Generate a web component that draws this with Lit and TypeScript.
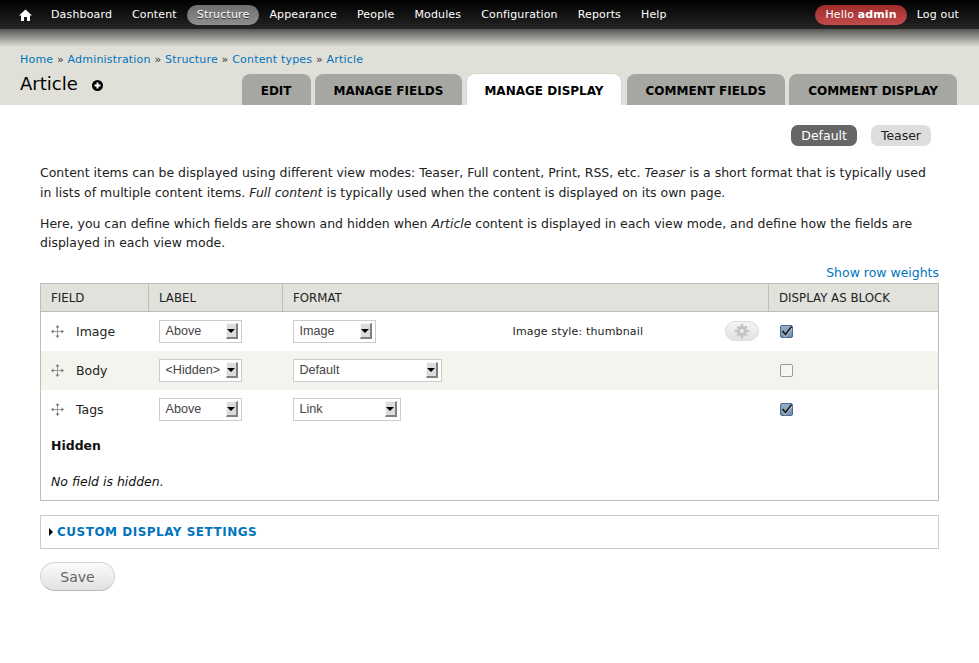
import { LitElement, html, css, svg } from 'lit';
import { customElement } from 'lit/decorators.js';

const NAV = ['Dashboard', 'Content', 'Structure', 'Appearance', 'People', 'Modules', 'Configuration', 'Reports', 'Help'];
const CRUMBS = ['Home', 'Administration', 'Structure', 'Content types', 'Article'];
const TABS = ['Edit', 'Manage fields', 'Manage display', 'Comment fields', 'Comment display'];

const ROWS = [
  { name: 'Image', label: 'Above', format: 'Image', width: 83, summary: 'Image style: thumbnail', checked: true },
  { name: 'Body', label: '<Hidden>', format: 'Default', width: 149, summary: '', checked: false },
  { name: 'Tags', label: 'Above', format: 'Link', width: 108, summary: '', checked: true },
];

const dragIcon = svg`<svg width="13" height="13" viewBox="0 0 13 13"><path d="M6.500 2V11M2 6.500H11" stroke="#999" stroke-width="1" fill="none"/><path d="M6.500 0 8.500 2.500H4.500ZM6.500 13 4.500 10.500H8.500ZM0 6.500 2.500 4.500V8.500ZM13 6.500 10.500 8.500V4.500Z" fill="#777"/></svg>`;

@customElement('app-root')
export class AppRoot extends LitElement {
  static styles = css`
    :host {
      display: block;
      background: #fff;
      min-height: 663px;
      font-family: "DejaVu Sans", sans-serif;
      font-size: 12.480px;
      color: #222;
    }
    a { color: #0074bd; text-decoration: none; }

    .toolbar {
      display: flex;
      align-items: center;
      height: 29px;
      padding: 0 10px 0 13px;
      background: linear-gradient(#000, #252525);
      box-sizing: border-box;
      font-size: 11px;
      letter-spacing: 0.15px;
      color: #fff;
    }
    .toolbar a { color: #fff; }
    .home { display: flex; width: 24px; justify-content: center; margin-right: 4px; }
    .nav { display: flex; align-items: center; flex: 1; }
    .nav a { padding: 2px 10px; height: 16px; line-height: 16px; border-radius: 10px; }
    .nav a.active { background: linear-gradient(#6e6e6e, #8e8e8e); text-shadow: #333 0 1px 0; }
    .user { display: flex; align-items: center; }
    .user a { padding: 2px 10px; height: 16px; line-height: 16px; }
    .hello { background: linear-gradient(#a02c2c, #c24a4a); border-radius: 10px; }

    .header {
      background: #e0e0d8;
      height: 76px;
      padding: 0 22px 0 20px;
      box-sizing: border-box;
      position: relative;
    }
    .shade {
      position: absolute;
      left: 0;
      right: 0;
      top: 0;
      height: 18px;
      background: linear-gradient(rgba(0, 0, 0, 0.62), rgba(0, 0, 0, 0));
    }
    .crumbs {
      padding-top: 24px;
      height: 14px;
      line-height: 14px;
      font-size: 11px;
      letter-spacing: 0.19px;
      color: #333;
      white-space: nowrap;
    }
    .title-row { display: flex; justify-content: space-between; height: 38px; }
    .title {
      display: flex;
      align-items: flex-start;
      font-size: 18px;
      line-height: 24px;
      color: #000;
      padding-top: 5px;
    }
    .title svg { margin: 8px 0 0 14px; }
    .tabs { display: flex; gap: 4px; align-self: flex-end; }
    .tab {
      height: 31px;
      line-height: 34px;
      padding: 0 19px;
      background: #a6a7a2;
      border-radius: 8px 8px 0 0;
      font-size: 12px;
      font-weight: bold;
      text-transform: uppercase;
      color: #000;
      white-space: nowrap;
    }
    .tab.active {
      margin: 0 2px 0 1px;
      padding: 0 17px;
      background: #fff;
      box-shadow: 0 0 0 1px #d4d4cc;
      clip-path: inset(-1px -1px 0 -1px);
    }

    .content { padding: 20px 40px 0; }
    .modes { display: flex; justify-content: flex-end; gap: 14px; margin-right: 8px; height: 21px; }
    .mode {
      height: 21px;
      line-height: 21px;
      padding: 0 10px;
      border-radius: 7px;
      background: #ddd;
      color: #222;
    }
    .mode.active { background: #666; color: #fff; }
    p { margin: 0 0 11.500px; padding-right: 6px; line-height: 19.500px; }
    .intro { margin-top: 17px; }
    .weights { text-align: right; height: 20px; line-height: 20px; margin-top: -1px; }

    table {
      width: 899px;
      table-layout: fixed;
      border-collapse: collapse;
      border: 1px solid #bebfb9;
    }
    th {
      height: 27px;
      padding: 0 10px;
      background: #e1e2dc;
      border: 1px solid #bebfb9;
      text-align: left;
      font-size: 11.800px;
      font-weight: normal;
      color: #222;
    }
    td { height: 39px; padding: 0 10px; box-sizing: border-box; color: #222; }
    tr.even td { background: #f3f4ee; }
    .field { display: flex; align-items: center; gap: 12px; padding-top: 1px; }
    .field svg { flex: none; }
    .format { display: flex; align-items: center; }
    .select {
      display: flex;
      align-items: center;
      height: 23px;
      box-sizing: border-box;
      border: 1px solid #ccc;
      padding: 0 3px 0 6px;
      background: #fff;
      font-family: "Liberation Sans", sans-serif;
      font-size: 12.600px;
      color: #444;
    }
    .select span { flex: 1; white-space: nowrap; }
    .arrow {
      display: flex;
      align-items: center;
      justify-content: center;
      flex: none;
      width: 12px;
      height: 16px;
      background: #dcdcdc;
      border-style: solid;
      border-width: 1px 2px 2px 1px;
      border-color: #f6f6f6 #808080 #808080 #f6f6f6;
      box-sizing: border-box;
    }
    .arrow i {
      border: 4px solid transparent;
      border-top: 4px solid #000;
      border-bottom: 0;
    }
    .summary { margin-left: 137px; font-size: 11px; letter-spacing: 0.15px; color: #222; white-space: nowrap; }
    .gear {
      display: flex;
      align-items: center;
      justify-content: center;
      width: 34px;
      height: 20px;
      box-sizing: border-box;
      margin: 0 0 0 auto;
      border: 1px solid #ddd;
      border-radius: 10px;
      background: linear-gradient(#f4f4f2, #e2e2e0);
    }
    .check {
      width: 13px;
      height: 13px;
      box-sizing: border-box;
      margin: 1px 0 0 1px;
      border: 1px solid #9a9a9a;
      border-radius: 2px;
      background: #f6f6f3;
    }
    .check.on { background: linear-gradient(#93aed0, #6f8fb5); border-color: #4f6a8a; }
    .check svg { display: block; overflow: visible; }
    .hidden-title { font-weight: bold; color: #111; padding-top: 0; height: 34px; }
    .hidden-empty { height: 38px; font-style: italic; color: #111; }

    .fieldset {
      display: flex;
      align-items: center;
      height: 34px;
      box-sizing: border-box;
      margin-top: 14px;
      padding-left: 8px;
      border: 1px solid #ccc;
      font-size: 12px;
      font-weight: bold;
      text-transform: uppercase;
      letter-spacing: 0.5px;
    }
    .tri { width: 0; height: 0; border: 4px solid transparent; border-left: 4px solid #000; border-right: 0; margin-right: 4px; }
    .save {
      display: block;
      width: 75px;
      height: 29px;
      margin-top: 13px;
      padding: 0;
      border: 1px solid #d4d4d4;
      border-bottom-color: #bbb;
      border-radius: 15px;
      background: linear-gradient(#fafafa, #e2e2e2);
      font-family: inherit;
      font-size: 14px;
      color: #666;
    }
  `;

  private _select(value: string, width: number) {
    return html`<div class="select" style="width:${width}px"><span>${value}</span><div class="arrow"><i></i></div></div>`;
  }

  private _check(on: boolean) {
    return html`<div class="check ${on ? 'on' : ''}">
      ${on ? html`<svg width="11" height="11" viewBox="0 0 11 11"><path d="M1.500 5 4.500 9 10.500 1" fill="none" stroke="#fff" stroke-width="3" opacity="0.6"/><path d="M1.500 5 4.500 8.500 10.500 0.500" fill="none" stroke="#222" stroke-width="2"/></svg>` : ''}
    </div>`;
  }

  render() {
    return html`
      <div class="toolbar">
        <a class="home" href="#"><svg width="13" height="12" viewBox="0 0 13 12"><path d="M6.500 0.500 13 6.500H11V12H8V8H5V12H2V6.500H0Z" fill="#fff"/></svg></a>
        <nav class="nav">
          ${NAV.map(n => html`<a href="#" class=${n === 'Structure' ? 'active' : ''}>${n}</a>`)}
        </nav>
        <div class="user">
          <a class="hello" href="#">Hello <b>admin</b></a>
          <a href="#">Log out</a>
        </div>
      </div>
      <header class="header">
        <div class="shade"></div>
        <div class="crumbs">
          ${CRUMBS.map((c, i) => html`${i ? ' » ' : ''}<a href="#">${c}</a>`)}
        </div>
        <div class="title-row">
          <div class="title">Article
            <svg width="11" height="11" viewBox="0 0 11 11"><circle cx="5.500" cy="5.500" r="5.500" fill="#000"/><path d="M2.500 5.500H8.500M5.500 2.500V8.500" stroke="#fff" stroke-width="2"/></svg>
          </div>
          <div class="tabs">
            ${TABS.map(t => html`<div class="tab ${t === 'Manage display' ? 'active' : ''}">${t}</div>`)}
          </div>
        </div>
      </header>
      <main class="content">
        <div class="modes">
          <a class="mode active" href="#">Default</a>
          <a class="mode" href="#">Teaser</a>
        </div>
        <p class="intro">Content items can be displayed using different view modes: Teaser, Full content, Print, RSS, etc. <em>Teaser</em> is a short format that is typically used in lists of multiple content items. <em>Full content</em> is typically used when the content is displayed on its own page.</p>
        <p>Here, you can define which fields are shown and hidden when <em>Article</em> content is displayed in each view mode, and define how the fields are displayed in each view mode.</p>
        <div class="weights"><a href="#">Show row weights</a></div>
        <table>
          <colgroup><col style="width:108px"><col style="width:134px"><col style="width:486px"><col></colgroup>
          <thead><tr><th>FIELD</th><th>LABEL</th><th>FORMAT</th><th>DISPLAY AS BLOCK</th></tr></thead>
          <tbody>
            ${ROWS.map((r, i) => html`
              <tr class=${i % 2 ? 'even' : ''}>
                <td><div class="field">${dragIcon}<span>${r.name}</span></div></td>
                <td>${this._select(r.label, 83)}</td>
                <td>
                  <div class="format">
                    ${this._select(r.format, r.width)}
                    ${r.summary ? html`<span class="summary">${r.summary}</span>
                      <div class="gear"><svg width="16" height="16" viewBox="0 0 16 16"><g fill="#c4c4c2"><circle cx="8" cy="8" r="5"/><path d="M6.800 0.800H9.200V15.200H6.800ZM0.800 6.800H15.200V9.200H0.800Z"/><path d="M2.500 4.200 4.200 2.500 13.500 11.800 11.800 13.500ZM11.800 2.500 13.500 4.200 4.200 13.500 2.500 11.800Z"/></g><circle cx="8" cy="8" r="2" fill="#eee"/></svg></div>` : ''}
                  </div>
                </td>
                <td>${this._check(r.checked)}</td>
              </tr>`)}
            <tr><td colspan="4" class="hidden-title">Hidden</td></tr>
            <tr><td colspan="4" class="hidden-empty">No field is hidden.</td></tr>
          </tbody>
        </table>
        <div class="fieldset"><span class="tri"></span><a href="#">Custom display settings</a></div>
        <button class="save">Save</button>
      </main>
    `;
  }
}
